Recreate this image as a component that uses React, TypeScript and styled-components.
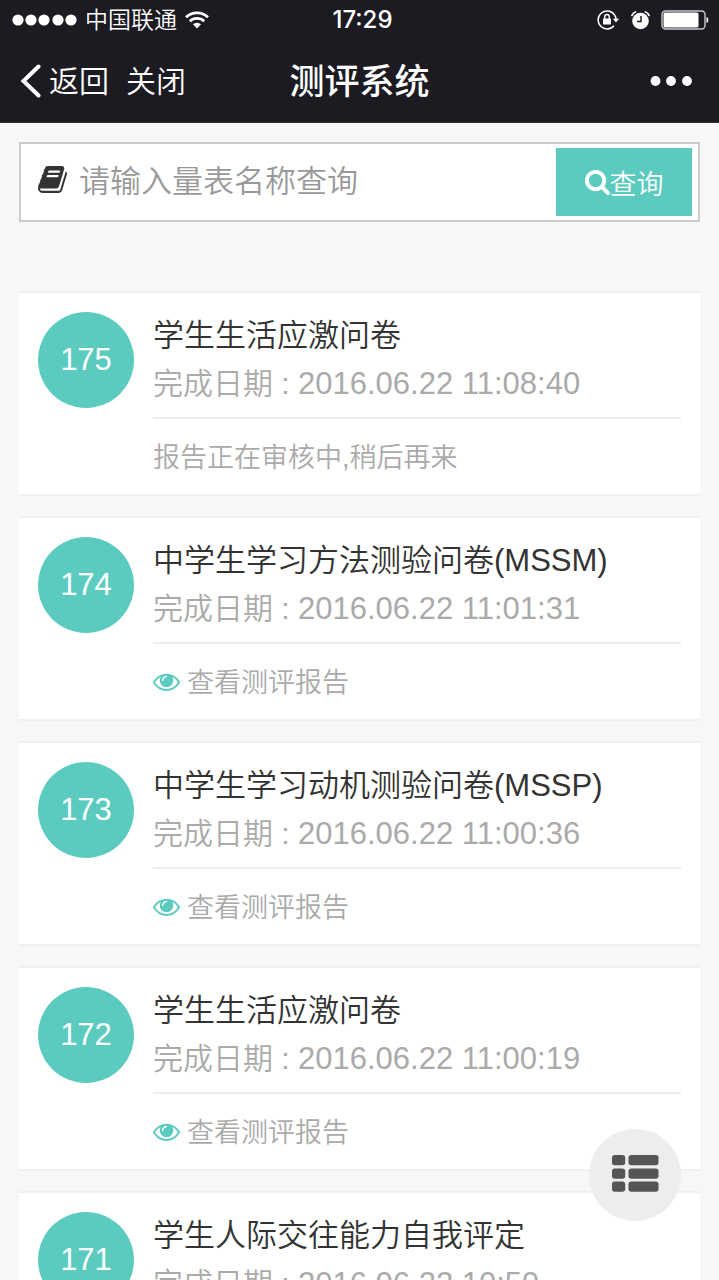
import React from "react";
import styled, { createGlobalStyle } from "styled-components";

const teal = "#5ccbbf";

const GlobalStyle = createGlobalStyle`
  *, *::before, *::after { box-sizing: border-box; }
  body {
    margin: 0;
    background: #f7f7f7;
    font-family: "Liberation Sans", "Noto Sans CJK SC", sans-serif;
    font-weight: 350;
    color: #333;
  }
  button, input { font: inherit; }
`;

const Screen = styled.div`
  height: 100vh;
  display: flex;
  flex-direction: column;
  overflow: hidden;
`;

const Header = styled.header`
  flex: none;
  background: #1c1b22;
  color: #fff;
  border-bottom: 1px solid #37302f;
`;

const Columns = styled.div`
  display: grid;
  grid-template-columns: 1fr auto 1fr;
  align-items: center;
`;

const StatusBar = styled(Columns)`
  height: 40px;
  padding: 0 6px 0 12px;
  font-size: 23px;
  line-height: 30px;
`;

const NavBar = styled(Columns)`
  height: 82px;
  padding: 0 20px;
`;

const Group = styled.div<{ $end?: boolean; $gap: number }>`
  display: flex;
  align-items: center;
  justify-content: ${(p) => (p.$end ? "flex-end" : "flex-start")};
  gap: ${(p) => p.$gap}px;
`;

const Clock = styled.time`
  font-family: Inter, sans-serif;
  font-weight: 500;
  font-size: 24px;
`;

const NavButton = styled.button`
  display: flex;
  align-items: center;
  gap: 8px;
  padding: 0;
  border: 0;
  background: none;
  color: inherit;
  font-size: 30px;
  line-height: 40px;
`;

const NavText = styled.span`
  padding-top: 2px;
`;

const PageTitle = styled.h1`
  margin: 0;
  padding-top: 2px;
  font-size: 35px;
  line-height: 48px;
  font-weight: 500;
`;

const Main = styled.main`
  flex: 1;
  min-height: 0;
  overflow-y: auto;
  scrollbar-width: none;
  padding: 19px;
`;

const SearchForm = styled.form`
  display: flex;
  align-items: center;
  gap: 12px;
  height: 80px;
  padding: 0 6px 0 17px;
  border: 2px solid #ccc;
  background: #fff;
`;

const SearchLabel = styled.label`
  display: flex;
  padding-bottom: 6px;
`;

const SearchInput = styled.input`
  flex: 1;
  min-width: 0;
  height: 60px;
  padding: 0;
  border: 0;
  outline: 0;
  background: none;
  font-size: 31px;
  color: #333;
  &::placeholder { color: #999; opacity: 1; }
`;

const SearchButton = styled.button`
  display: flex;
  align-items: center;
  justify-content: center;
  width: 136px;
  height: 68px;
  padding: 0;
  border: 0;
  background: ${teal};
  color: #fff;
  font-size: 27px;
`;

const List = styled.ul`
  list-style: none;
  margin: 69px 0 0;
  padding: 0;
  display: flex;
  flex-direction: column;
  gap: 20px;
`;

const Card = styled.li`
  display: flex;
  gap: 19px;
  padding: 19px 19px 0;
  background: #fff;
  border: solid #f0f0f0;
  border-width: 2px 0;
`;

const Badge = styled.span`
  flex: none;
  width: 96px;
  height: 96px;
  border-radius: 50%;
  display: flex;
  align-items: center;
  justify-content: center;
  background: ${teal};
  color: #fff;
  font-size: 31px;
`;

const CardBody = styled.div`
  flex: 1;
  min-width: 0;
`;

const CardTitle = styled.h2`
  margin: 0;
  font-size: 31px;
  line-height: 48px;
  font-weight: 350;
  white-space: nowrap;
`;

const CardDate = styled.p`
  margin: 0;
  padding-bottom: 9px;
  border-bottom: 2px solid #eee;
  font-size: 30px;
  line-height: 48px;
  color: #aaa;
`;

const Stamp = styled.time`
  font-size: 31px;
  line-height: 1;
`;

const CardFooter = styled.div`
  display: flex;
  align-items: center;
  height: 75px;
  padding-bottom: 3px;
  font-size: 27px;
  color: #aaa;
`;

const ReportLink = styled.a`
  display: flex;
  align-items: center;
  gap: 7px;
  color: inherit;
  text-decoration: none;
`;

const MenuButton = styled.button`
  position: fixed;
  right: 38px;
  bottom: 59px;
  width: 92px;
  height: 92px;
  padding: 0 0 4px;
  border: 0;
  border-radius: 50%;
  background: #ededed;
  display: flex;
  align-items: center;
  justify-content: center;
`;

const SignalIcon = () => (
  <svg width="65" height="12" viewBox="0 0 65 12" fill="#fff" aria-hidden="true">
    {[6, 19, 32, 46, 59].map((x) => (
      <circle key={x} cx={x} cy="6" r="5.6" />
    ))}
  </svg>
);

const WifiIcon = () => (
  <svg width="24" height="18" viewBox="0 0 24 18" fill="none" stroke="#fff" strokeWidth="2.8" aria-hidden="true">
    <path d="M1 6.300a16 16 0 0 1 22 0" />
    <path d="M4.800 10.300a10.500 10.500 0 0 1 14.400 0" />
    <path d="M12 17.500l-4-4.200a6 6 0 0 1 8 0z" fill="#fff" stroke="none" />
  </svg>
);

const LockIcon = () => (
  <svg width="23" height="20" viewBox="0 0 23 20" fill="none" stroke="#fff" aria-hidden="true">
    <path d="M17.600 5A9 9 0 1 0 17 15.800" strokeWidth="1.500" />
    <path d="M17.600 5a9 9 0 0 1 1.400 4" strokeWidth="1.500" />
    <path d="M15.800 8.800h6.400l-3.200 3.700z" fill="#fff" stroke="none" />
    <rect x="6" y="8.500" width="8" height="6" rx=".6" fill="#fff" stroke="none" />
    <path d="M7.700 9V6.800a2.300 2.300 0 0 1 4.600 0V9" strokeWidth="1.400" />
  </svg>
);

const AlarmIcon = () => (
  <svg width="19" height="19" viewBox="0 0 19 19" aria-hidden="true">
    <circle cx="9.500" cy="10" r="8.300" fill="#fff" />
    <path d="M10 5v5.500H6" fill="none" stroke="#1c1b22" strokeWidth="1.500" />
    <path d="M1 4.300A6 6 0 0 1 4.500 1M18 4.300A6 6 0 0 0 14.500 1" fill="none" stroke="#fff" strokeWidth="1.800" strokeLinecap="round" />
  </svg>
);

const BatteryIcon = () => (
  <svg width="52" height="20" viewBox="0 0 52 20" aria-hidden="true">
    <rect x="1" y="1" width="43" height="18" rx="3.500" fill="none" stroke="#c9c9cc" strokeWidth="1.400" />
    <rect x="2.500" y="2.500" width="35" height="15" rx="1.500" fill="#fff" />
    <path d="M45.500 7c2.500.6 2.500 5.400 0 6z" fill="#fff" />
  </svg>
);

const BackIcon = () => (
  <svg width="21" height="34" viewBox="0 0 21 34" fill="none" stroke="#fff" strokeWidth="4" strokeLinecap="round" aria-hidden="true">
    <path d="M18.500 2.500L3.500 17l15 14.500" />
  </svg>
);

const MoreIcon = () => (
  <svg width="49" height="10" viewBox="0 0 49 10" fill="#fff" aria-hidden="true">
    <circle cx="5.500" cy="5" r="4.900" />
    <circle cx="21" cy="5" r="4.900" />
    <circle cx="37" cy="5" r="4.900" />
  </svg>
);

const BookIcon = () => (
  <svg width="29" height="27" viewBox="0 128 1664 1536" fill="#333" aria-hidden="true">
    <path d="M1639 478q40 57 18 129l-275 906q-19 64-76.500 107.500t-122.500 43.500h-923q-77 0-148.500-53.500t-99.500-131.500q-24-67-2-127 0-4 3-27t4-37q1-8-3-21.500t-3-19.500q2-11 8-21t16.500-23.500 16.500-23.500q23-38 45-91.500t30-91.500q3-10 .5-30t-.5-28q3-11 17-28t17-23q21-36 42-92t25-90q1-9-2.500-32t.5-28q4-13 22-30.500t22-22.500q19-26 42.500-84.500t27.500-96.500q1-8-3-25.500t-2-26.500q2-8 9-18t18-23 17-21q8-12 16.500-30.500t15-35 16-36 19.500-32 26.500-23.500 36-11.500 47.500 5.500l-1 3q38-9 51-9h761q74 0 114 56t18 130l-274 906q-36 119-71.500 153.500t-128.500 34.500h-869q-27 0-38 15-11 16-1 43 24 70 144 70h923q29 0 56-15.500t35-41.500l300-987q7-22 5-57 38 15 59 43zm-1064 2q-4 13 2 22.500t20 9.500h608q13 0 25.500-9.500t16.500-22.500l21-64q4-13-2-22.500t-20-9.500h-608q-13 0-25.500 9.500t-16.500 22.500zm-83 256q-4 13 2 22.500t20 9.500h608q13 0 25.500-9.500t16.500-22.500l21-64q4-13-2-22.500t-20-9.500h-608q-13 0-25.500 9.500t-16.500 22.500z" />
  </svg>
);

const SearchIcon = () => (
  <svg width="25" height="25" viewBox="64 128 1664 1664" fill="#fff" aria-hidden="true">
    <path d="M1216 832q0-185-131.500-316.500t-316.500-131.500-316.500 131.500-131.500 316.500 131.500 316.500 316.500 131.500 316.500-131.500 131.500-316.500zm512 832q0 52-38 90t-90 38q-54 0-90-38l-343-342q-179 124-399 124-143 0-273.500-55.500t-225-150-150-225-55.500-273.500 55.500-273.500 150-225 225-150 273.500-55.500 273.500 55.500 225 150 150 225 55.500 273.500q0 220-124 399l343 343q37 37 37 90z" />
  </svg>
);

const EyeIcon = () => (
  <svg width="27" height="22" viewBox="0 76 1792 1460" fill={teal} aria-hidden="true">
    <path d="M1664 960q-152-236-381-353 61 104 61 225 0 185-131.500 316.500t-316.500 131.500-316.500-131.500-131.500-316.500q0-121 61-225-229 117-381 353 133 205 333.500 326.500t434.500 121.500 434.500-121.500 333.500-326.500zm-720-384q0-20-14-34t-34-14q-125 0-214.500 89.500t-89.500 214.500q0 20 14 34t34 14 34-14 14-34q0-86 61-147t147-61q20 0 34-14t14-34zm848 384q0 34-20 69-140 230-376.500 368.500t-499.500 138.500-499.500-139-376.500-368q-20-35-20-69t20-69q140-229 376.500-368t499.500-139 499.500 139 376.500 368q20 35 20 69z" />
  </svg>
);

const ListIcon = () => (
  <svg width="47" height="37" viewBox="0 0 47 37" fill="#555" aria-hidden="true">
    {[0, 13.5, 26.5].map((y) => (
      <React.Fragment key={y}>
        <rect x="0" y={y} width="13.200" height="10.300" rx="2.800" />
        <rect x="16.500" y={y} width="30" height="10.300" rx="2.800" />
      </React.Fragment>
    ))}
  </svg>
);

const records = [
  { id: 175, title: "学生生活应激问卷", date: "2016.06.22 11:08:40", ready: false },
  { id: 174, title: "中学生学习方法测验问卷(MSSM)", date: "2016.06.22 11:01:31", ready: true },
  { id: 173, title: "中学生学习动机测验问卷(MSSP)", date: "2016.06.22 11:00:36", ready: true },
  { id: 172, title: "学生生活应激问卷", date: "2016.06.22 11:00:19", ready: true },
  { id: 171, title: "学生人际交往能力自我评定", date: "2016.06.22 10:59", ready: true },
];

export default function App() {
  return (
    <Screen lang="zh-CN">
      <GlobalStyle />
      <Header>
        <StatusBar>
          <Group $gap={8}>
            <SignalIcon />
            <span>中国联通</span>
            <WifiIcon />
          </Group>
          <Clock>17:29</Clock>
          <Group $gap={11} $end>
            <LockIcon />
            <AlarmIcon />
            <BatteryIcon />
          </Group>
        </StatusBar>
        <NavBar>
          <Group $gap={17}>
            <NavButton type="button">
              <BackIcon />
              <NavText>返回</NavText>
            </NavButton>
            <NavButton type="button">
              <NavText>关闭</NavText>
            </NavButton>
          </Group>
          <PageTitle>测评系统</PageTitle>
          <Group $gap={0} $end>
            <NavButton type="button" aria-label="更多">
              <MoreIcon />
            </NavButton>
          </Group>
        </NavBar>
      </Header>
      <Main>
        <SearchForm onSubmit={(e) => e.preventDefault()}>
          <SearchLabel htmlFor="scale-name" aria-label="量表名称">
            <BookIcon />
          </SearchLabel>
          <SearchInput id="scale-name" type="text" placeholder="请输入量表名称查询" />
          <SearchButton type="submit">
            <SearchIcon />
            查询
          </SearchButton>
        </SearchForm>
        <List>
          {records.map((r) => (
            <Card key={r.id}>
              <Badge>{r.id}</Badge>
              <CardBody>
                <CardTitle>{r.title}</CardTitle>
                <CardDate>
                  完成日期 : <Stamp>{r.date}</Stamp>
                </CardDate>
                <CardFooter>
                  {r.ready ? (
                    <ReportLink href={`#report-${r.id}`}>
                      <EyeIcon />
                      查看测评报告
                    </ReportLink>
                  ) : (
                    "报告正在审核中,稍后再来"
                  )}
                </CardFooter>
              </CardBody>
            </Card>
          ))}
        </List>
      </Main>
      <MenuButton type="button" aria-label="菜单">
        <ListIcon />
      </MenuButton>
    </Screen>
  );
}
